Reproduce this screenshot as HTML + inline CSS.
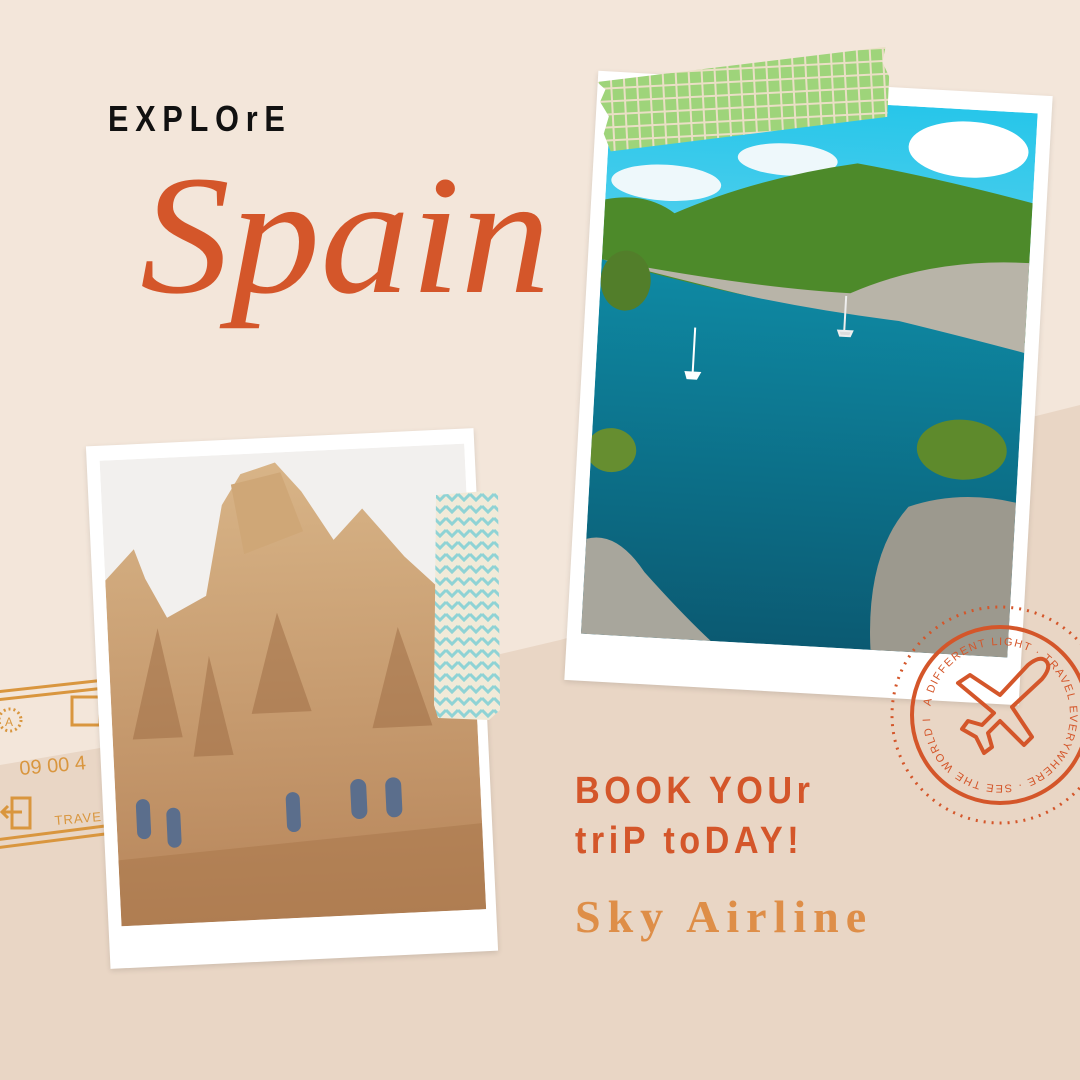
<!DOCTYPE html>
<html><head><meta charset="utf-8"><style>
*{margin:0;padding:0;box-sizing:border-box}
body{width:1080px;height:1080px;overflow:hidden;background:#f3e6da;position:relative;font-family:"Liberation Sans",sans-serif}
.paper{position:absolute;left:0;top:0;width:1080px;height:1080px;background:#e9d6c5;clip-path:polygon(0px 765px,100px 748px,560px 640px,700px 600px,760px 560px,1000px 425px,1080px 405px,1080px 1080px,0px 1080px)}
.frame{position:absolute;background:#fff;box-shadow:0 2px 6px rgba(0,0,0,.12)}
.abs{position:absolute}
</style></head><body>
<div class="paper"></div>

<svg class="abs" style="left:0;top:670px" width="110" height="190" viewBox="0 0 110 190">
<g fill="none" stroke="#d9963e" stroke-width="3">
<path d="M-5 22 L105 10 M-5 30 L105 18"/>
<path d="M-5 178 L105 164 M-5 170 L105 156"/>
<circle cx="10" cy="50" r="11" stroke-dasharray="2 3"/>
<rect x="72" y="27" width="28" height="28"/>
<rect x="12" y="128" width="18" height="30"/>
<path d="M2 142 h20 M8 136 l-6 6 6 6"/>
</g>
<text x="5" y="56" font-size="12" fill="#d9963e">A</text>
<text x="20" y="105" font-size="20" fill="#d9963e" transform="rotate(-5 20 105)">09 00 4</text>
<text x="55" y="155" font-size="13" fill="#d9963e" letter-spacing="1" transform="rotate(-5 55 155)">TRAVE</text>
</svg>

<div class="abs" style="left:108px;top:98px;font-size:36px;font-weight:bold;letter-spacing:8px;color:#111;transform:scaleX(.85);transform-origin:0 0">EXPLOrE</div>
<div class="abs" style="left:140px;top:150px;font-family:'Liberation Serif',serif;font-style:italic;font-size:170px;color:#d4562a;line-height:1;transform:scaleX(1.06);transform-origin:0 0">Spain</div>

<div class="frame" style="left:581px;top:83px;width:455px;height:610px;transform:rotate(3.2deg)">
<svg class="abs" style="left:14px;top:18px" width="427" height="545" viewBox="0 0 427 545">
<defs><linearGradient id="sky" x1="0" y1="0" x2="0" y2="1"><stop offset="0" stop-color="#27c6ea"/><stop offset="1" stop-color="#bfe6f2"/></linearGradient>
<linearGradient id="sea" x1="0" y1="0" x2="0" y2="1"><stop offset="0" stop-color="#0e8aa4"/><stop offset="1" stop-color="#0b5a72"/></linearGradient></defs>
<rect width="427" height="545" fill="url(#sky)"/>
<ellipse cx="360" cy="40" rx="60" ry="28" fill="#fff"/>
<ellipse cx="180" cy="60" rx="50" ry="16" fill="#eef8fb"/>
<ellipse cx="60" cy="90" rx="55" ry="18" fill="#eef8fb"/>
<path d="M0 110 Q40 100 70 120 Q150 80 250 60 Q330 70 427 90 L427 230 L0 190Z" fill="#4d8a2a"/>
<path d="M0 170 Q150 190 250 190 Q330 150 427 150 L427 240 Q300 230 0 170Z" fill="#b8b4a8"/>
<path d="M0 170 Q150 205 300 215 Q380 230 427 240 L427 545 L0 545Z" fill="url(#sea)"/>
<path d="M0 450 Q30 440 60 480 Q100 520 130 545 L0 545Z" fill="#a8a69c"/>
<path d="M290 545 Q280 450 320 400 Q370 380 427 390 L427 545Z" fill="#9c998e"/>
<ellipse cx="370" cy="340" rx="45" ry="30" fill="#5e8a2c"/>
<ellipse cx="25" cy="190" rx="25" ry="30" fill="#527e2a"/>
<ellipse cx="20" cy="360" rx="25" ry="22" fill="#668e30"/>
<path d="M90 278 h14 l-3 6 h-9z M97 278 v-45" stroke="#fff" stroke-width="2" fill="#fff"/>
<path d="M240 228 h14 l-2 5 h-10z M246 228 v-35" stroke="#eee" stroke-width="2" fill="#ddd"/>
</svg>
</div>
<svg class="abs" style="left:596px;top:62px;transform:rotate(-3deg);transform-origin:0 0" width="292" height="92">
<defs><pattern id="g" width="13" height="13" patternUnits="userSpaceOnUse"><rect width="13" height="13" fill="#eadfc5"/><rect x="2" y="2" width="11" height="11" fill="#9ed47a"/></pattern></defs>
<path d="M0 20 L290 0 L286 15 L292 30 L288 70 L10 90 L4 72 L10 55 L2 40 L8 28Z" fill="url(#g)"/>
</svg>

<div class="frame" style="left:98px;top:437px;width:388px;height:523px;transform:rotate(-2.7deg)">
<svg class="abs" style="left:13px;top:15px" width="365" height="466" viewBox="0 0 365 466">
<defs><linearGradient id="st" x1="0" y1="0" x2="0" y2="1"><stop offset="0" stop-color="#d8b487"/><stop offset="1" stop-color="#b7855a"/></linearGradient></defs>
<rect width="365" height="466" fill="#f2f0ee"/>
<path d="M0 120 L30 90 L40 120 L60 160 L100 140 L120 50 L140 20 L175 10 L200 40 L230 90 L260 60 L300 110 L330 140 L365 170 L365 466 L0 466Z" fill="url(#st)"/>
<path d="M130 30 L180 20 L200 80 L140 100Z" fill="#cfa777"/>
<g fill="#9c6a42" opacity=".5"><path d="M20 280 L50 170 L70 280Z M140 260 L170 160 L200 260Z M260 280 L290 180 L320 280Z M80 300 L100 200 L120 300Z"/></g>
<g fill="#5b6e8c"><rect x="20" y="340" width="14" height="40" rx="7"/><rect x="50" y="350" width="14" height="40" rx="7"/><rect x="235" y="330" width="16" height="40" rx="8"/><rect x="270" y="330" width="16" height="40" rx="8"/><rect x="170" y="340" width="14" height="40" rx="7"/></g>
<path d="M0 400 L365 380 L365 466 L0 466Z" fill="#a8754a" opacity=".5"/>
</svg>
</div>
<svg class="abs" style="left:434px;top:490px" width="66" height="230">
<defs><pattern id="z" width="12" height="12" patternUnits="userSpaceOnUse"><rect width="12" height="12" fill="#f1ead8"/><path d="M0 4 L6 10 L12 4" stroke="#8fd3d5" stroke-width="3" fill="none"/></pattern></defs>
<path d="M2 5 L64 0 L66 220 L55 230 L4 228 L0 215Z" fill="url(#z)"/>
</svg>

<div class="abs" style="left:575px;top:766px;font-size:38px;font-weight:bold;color:#d4562a;line-height:50px;letter-spacing:5px;transform:scaleX(.9);transform-origin:0 0">BOOK YOUr<br>triP toDAY!</div>
<div class="abs" style="left:575px;top:890px;font-family:'Liberation Serif',serif;font-weight:bold;font-size:46px;color:#de8e48;letter-spacing:7px">Sky Airline</div>

<svg class="abs" style="left:888px;top:603px" width="224" height="224" viewBox="0 0 224 224">
<circle cx="112" cy="112" r="108" fill="none" stroke="#d4562a" stroke-width="3" stroke-dasharray="2 6"/>
<circle cx="112" cy="112" r="88" fill="none" stroke="#d4562a" stroke-width="4"/>
<path id="c" d="M112 112 m-70 0 a70 70 0 1 1 140 0 a70 70 0 1 1 -140 0" fill="none"/>
<text font-size="11" fill="#d4562a" letter-spacing="1.5"><textPath href="#c" startOffset="2%">A DIFFERENT LIGHT · TRAVEL EVERYWHERE · SEE THE WORLD IN</textPath></text>
<path d="M70 80 L82 72 L112 92 L140 62 Q152 52 158 58 Q164 64 154 76 L124 104 L144 134 L136 142 L112 118 L100 130 L104 144 L96 150 L88 134 L74 126 L80 118 L94 122 L106 110 Z" fill="none" stroke="#d4562a" stroke-width="4" stroke-linejoin="round"/>
</svg>
</body></html>
